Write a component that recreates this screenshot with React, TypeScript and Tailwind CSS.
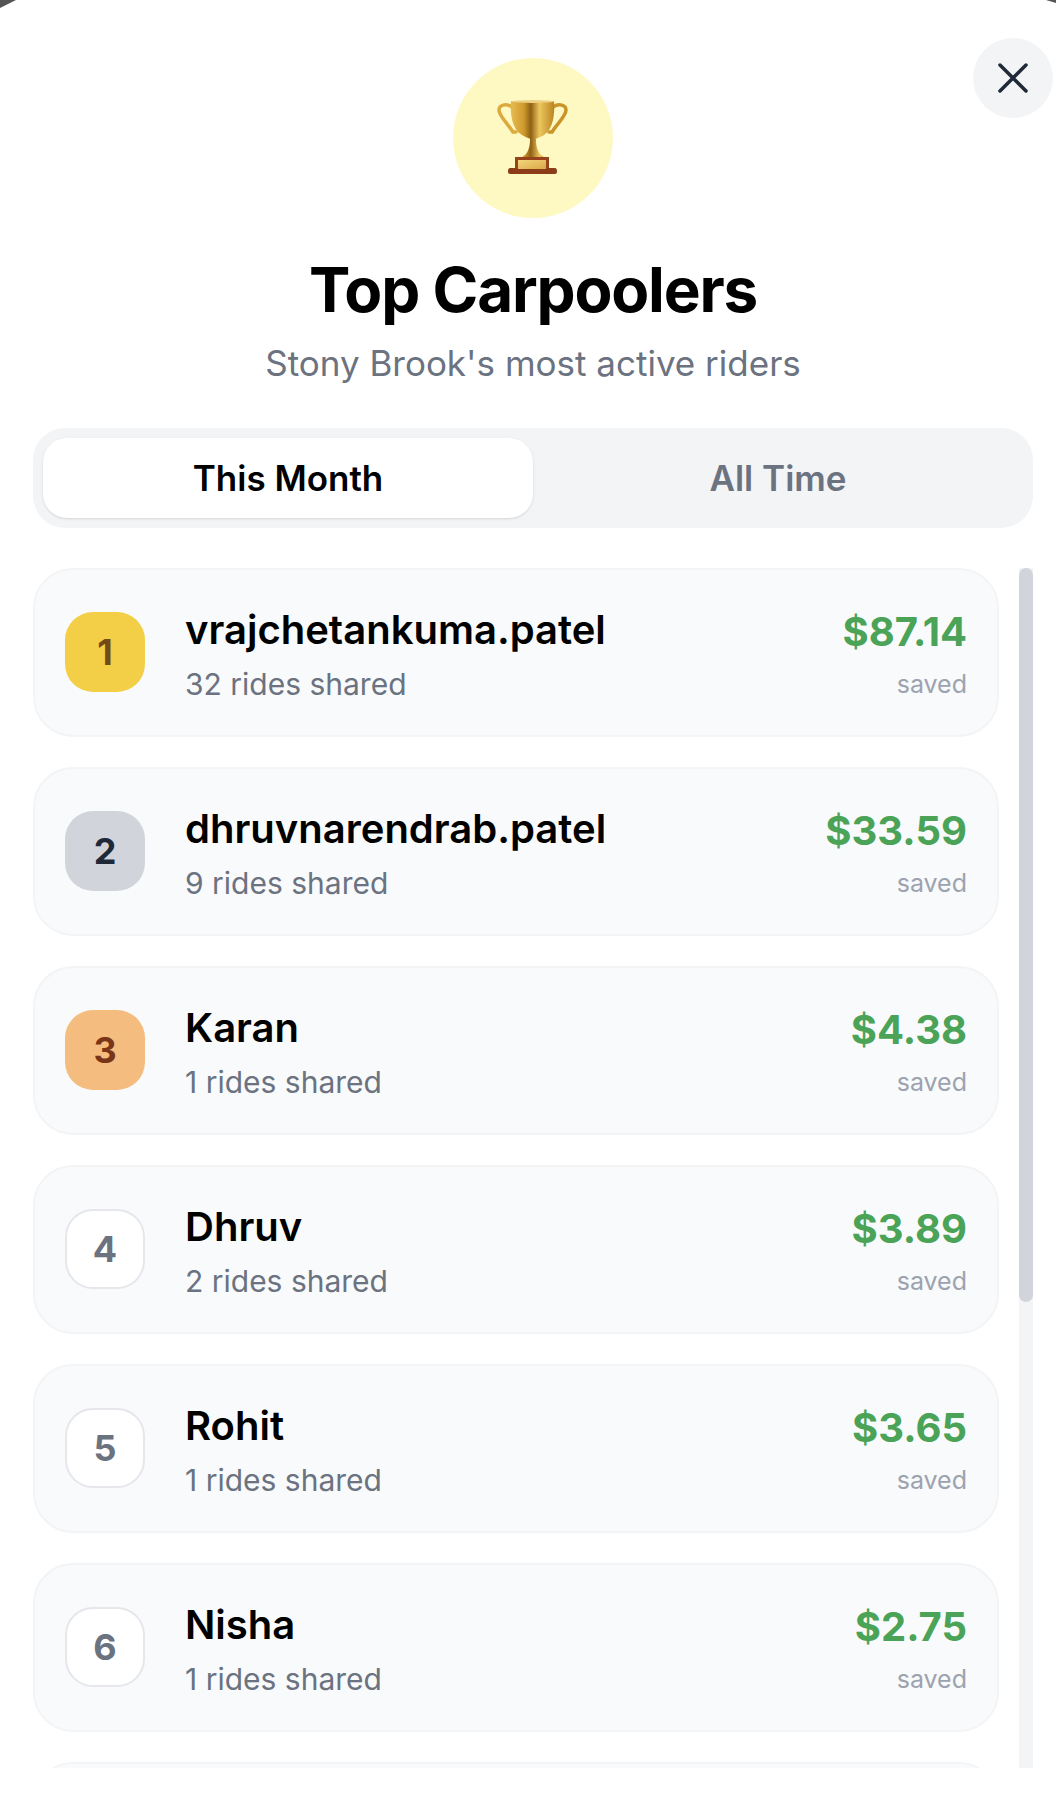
import React, { useState } from 'react';

interface Rider {
  rank: number;
  name: string;
  rides: number;
  saved: string;
}

const riders: Rider[] = [
  { rank: 1, name: 'vrajchetankuma.patel', rides: 32, saved: '$87.14' },
  { rank: 2, name: 'dhruvnarendrab.patel', rides: 9, saved: '$33.59' },
  { rank: 3, name: 'Karan', rides: 1, saved: '$4.38' },
  { rank: 4, name: 'Dhruv', rides: 2, saved: '$3.89' },
  { rank: 5, name: 'Rohit', rides: 1, saved: '$3.65' },
  { rank: 6, name: 'Nisha', rides: 1, saved: '$2.75' },
];

const badgeStyles: Record<number, string> = {
  1: 'bg-[#f3cf48] text-[#754a18]',
  2: 'bg-[#d1d5db] text-[#1f2937]',
  3: 'bg-[#f4bd7f] text-[#7a3418]',
};

const Trophy = () => (
  <svg width="72" height="76" viewBox="0 0 72 76">
    <defs>
      <linearGradient id="cup" x1="0" y1="0" x2="1" y2="0">
        <stop offset="0" stopColor="#e6bb55" />
        <stop offset="0.3" stopColor="#cf9a2c" />
        <stop offset="0.46" stopColor="#8f6014" />
        <stop offset="0.66" stopColor="#edc65e" />
        <stop offset="1" stopColor="#b98422" />
      </linearGradient>
      <linearGradient id="plate" x1="0" y1="0" x2="1" y2="1">
        <stop offset="0" stopColor="#f4d67c" />
        <stop offset="1" stopColor="#d9a748" />
      </linearGradient>
    </defs>
    {/* handles */}
    <path d="M15 7C9 3 2 5 2 10c0 6 9 14 14 22l3 0" fill="none" stroke="#dcaa3c" strokeWidth="3.500" strokeLinecap="round" />
    <path d="M56 7c6-4 13-2 13 3 0 6-9 14-14 22l-3 0" fill="none" stroke="#c99428" strokeWidth="3.500" strokeLinecap="round" />
    {/* bowl and stem */}
    <path d="M14 1h43c1 14-1 28-10 34-3 2-7 3-8 4 0 6 1 12 5 16 2 1 3 2 3 3H25c0-1 1-2 3-3 4-4 5-10 5-16-1-1-5-2-8-4C15 29 13 15 14 1z" fill="url(#cup)" />
    <ellipse cx="35.500" cy="1.500" rx="21.500" ry="1.500" fill="#ecd084" />
    {/* base */}
    <path d="M18 57h34v12H18z" fill="#96431b" />
    <path d="M13 68h45c1 0 2 1 2 3v1c0 1-1 2-2 2H13c-1 0-2-1-2-2v-1c0-2 1-3 2-3z" fill="#8c3c18" />
    <rect x="21" y="60" width="28" height="9" fill="url(#plate)" />
  </svg>
);

const RiderCard = ({ rider }: { rider: Rider }) => {
  const badge = badgeStyles[rider.rank] ?? 'bg-white text-[#6b7280] border-2 border-[#e5e7eb]';
  return (
    <div className="flex h-[169px] shrink-0 items-center rounded-[40px] border-2 border-[#f3f4f6] bg-[#f9fafb] px-[30px]">
      <div className={`mb-[2px] flex h-[80px] w-[80px] shrink-0 items-center justify-center rounded-[28px] text-[36px] font-bold ${badge}`}>
        {rider.rank}
      </div>
      <div className="ml-[40px] min-w-0 flex-1 pt-[6px]">
        <div className="text-[40px] leading-[52px] font-semibold text-black">{rider.name}</div>
        <div className="mt-[4px] text-[30px] leading-[48px] text-[#6b7280]">{rider.rides} rides shared</div>
      </div>
      <div className="pt-[8px] text-right">
        <div className="text-[40px] leading-[52px] font-bold text-[#4aa357]">{rider.saved}</div>
        <div className="mt-[2px] text-[25px] leading-[48px] text-[#9ca3af]">saved</div>
      </div>
    </div>
  );
};

export default function App() {
  const [tab, setTab] = useState<'month' | 'all'>('month');

  return (
    <div className="relative flex h-[1816px] w-[1056px] flex-col overflow-hidden bg-white font-['Inter',sans-serif]">
      {/* Corners of the screen behind the sheet */}
      <div className="absolute top-0 left-0 h-[8px] w-[16px] bg-[#555555] [clip-path:polygon(0_0,100%_0,0_100%)]" />
      <div className="absolute top-0 right-0 h-[3px] w-[10px] bg-[#555555] [clip-path:polygon(0_0,100%_0,100%_100%)]" />

      <button className="absolute top-[38px] left-[973px] flex h-[80px] w-[80px] items-center justify-center rounded-full bg-[#f3f4f6]" aria-label="Close">
        <svg width="48" height="48" viewBox="0 0 48 48" fill="none" stroke="#1f2937" strokeWidth="3.500" strokeLinecap="round">
          <path d="M11 11l26 26M37 11L11 37" />
        </svg>
      </button>

      <div className="flex flex-col items-center pt-[58px] pr-[23px] pl-[33px]">
        <div className="flex h-[160px] w-[160px] items-center justify-center rounded-full bg-[#fef9c3]">
          <Trophy />
        </div>
        <h1 className="mt-[32px] text-[62px] leading-[80px] font-bold tracking-[-1.2px] text-black">Top Carpoolers</h1>
        <p className="mt-[9px] text-[35px] leading-[48px] text-[#6b7280]">Stony Brook's most active riders</p>

        <div className="mt-[41px] flex h-[100px] w-full rounded-[32px] bg-[#f3f4f6] p-[10px]">
          <button
            onClick={() => setTab('month')}
            className={`flex-1 rounded-[24px] text-[35px] font-semibold ${tab === 'month' ? 'bg-white text-black shadow-sm' : 'text-[#6b7280]'}`}
          >
            This Month
          </button>
          <button
            onClick={() => setTab('all')}
            className={`flex-1 rounded-[24px] text-[35px] font-semibold ${tab === 'all' ? 'bg-white text-black shadow-sm' : 'text-[#6b7280]'}`}
          >
            All Time
          </button>
        </div>
      </div>

      <div className="mt-[40px] ml-[33px] flex h-[1200px] w-[1000px] gap-[20px] overflow-hidden">
        <div className="flex w-[966px] flex-col gap-[30px]">
          {riders.map((rider) => (
            <RiderCard key={rider.rank} rider={rider} />
          ))}
          {/* next card, scrolled out of view */}
          <div className="h-[169px] shrink-0 rounded-[40px] border-2 border-[#f3f4f6] bg-[#f9fafb]" />
        </div>
        <div className="w-[14px] shrink-0 bg-[#f3f4f6]">
          <div className="h-[734px] rounded-[7px] bg-[#d1d5db]" />
        </div>
      </div>
    </div>
  );
}
